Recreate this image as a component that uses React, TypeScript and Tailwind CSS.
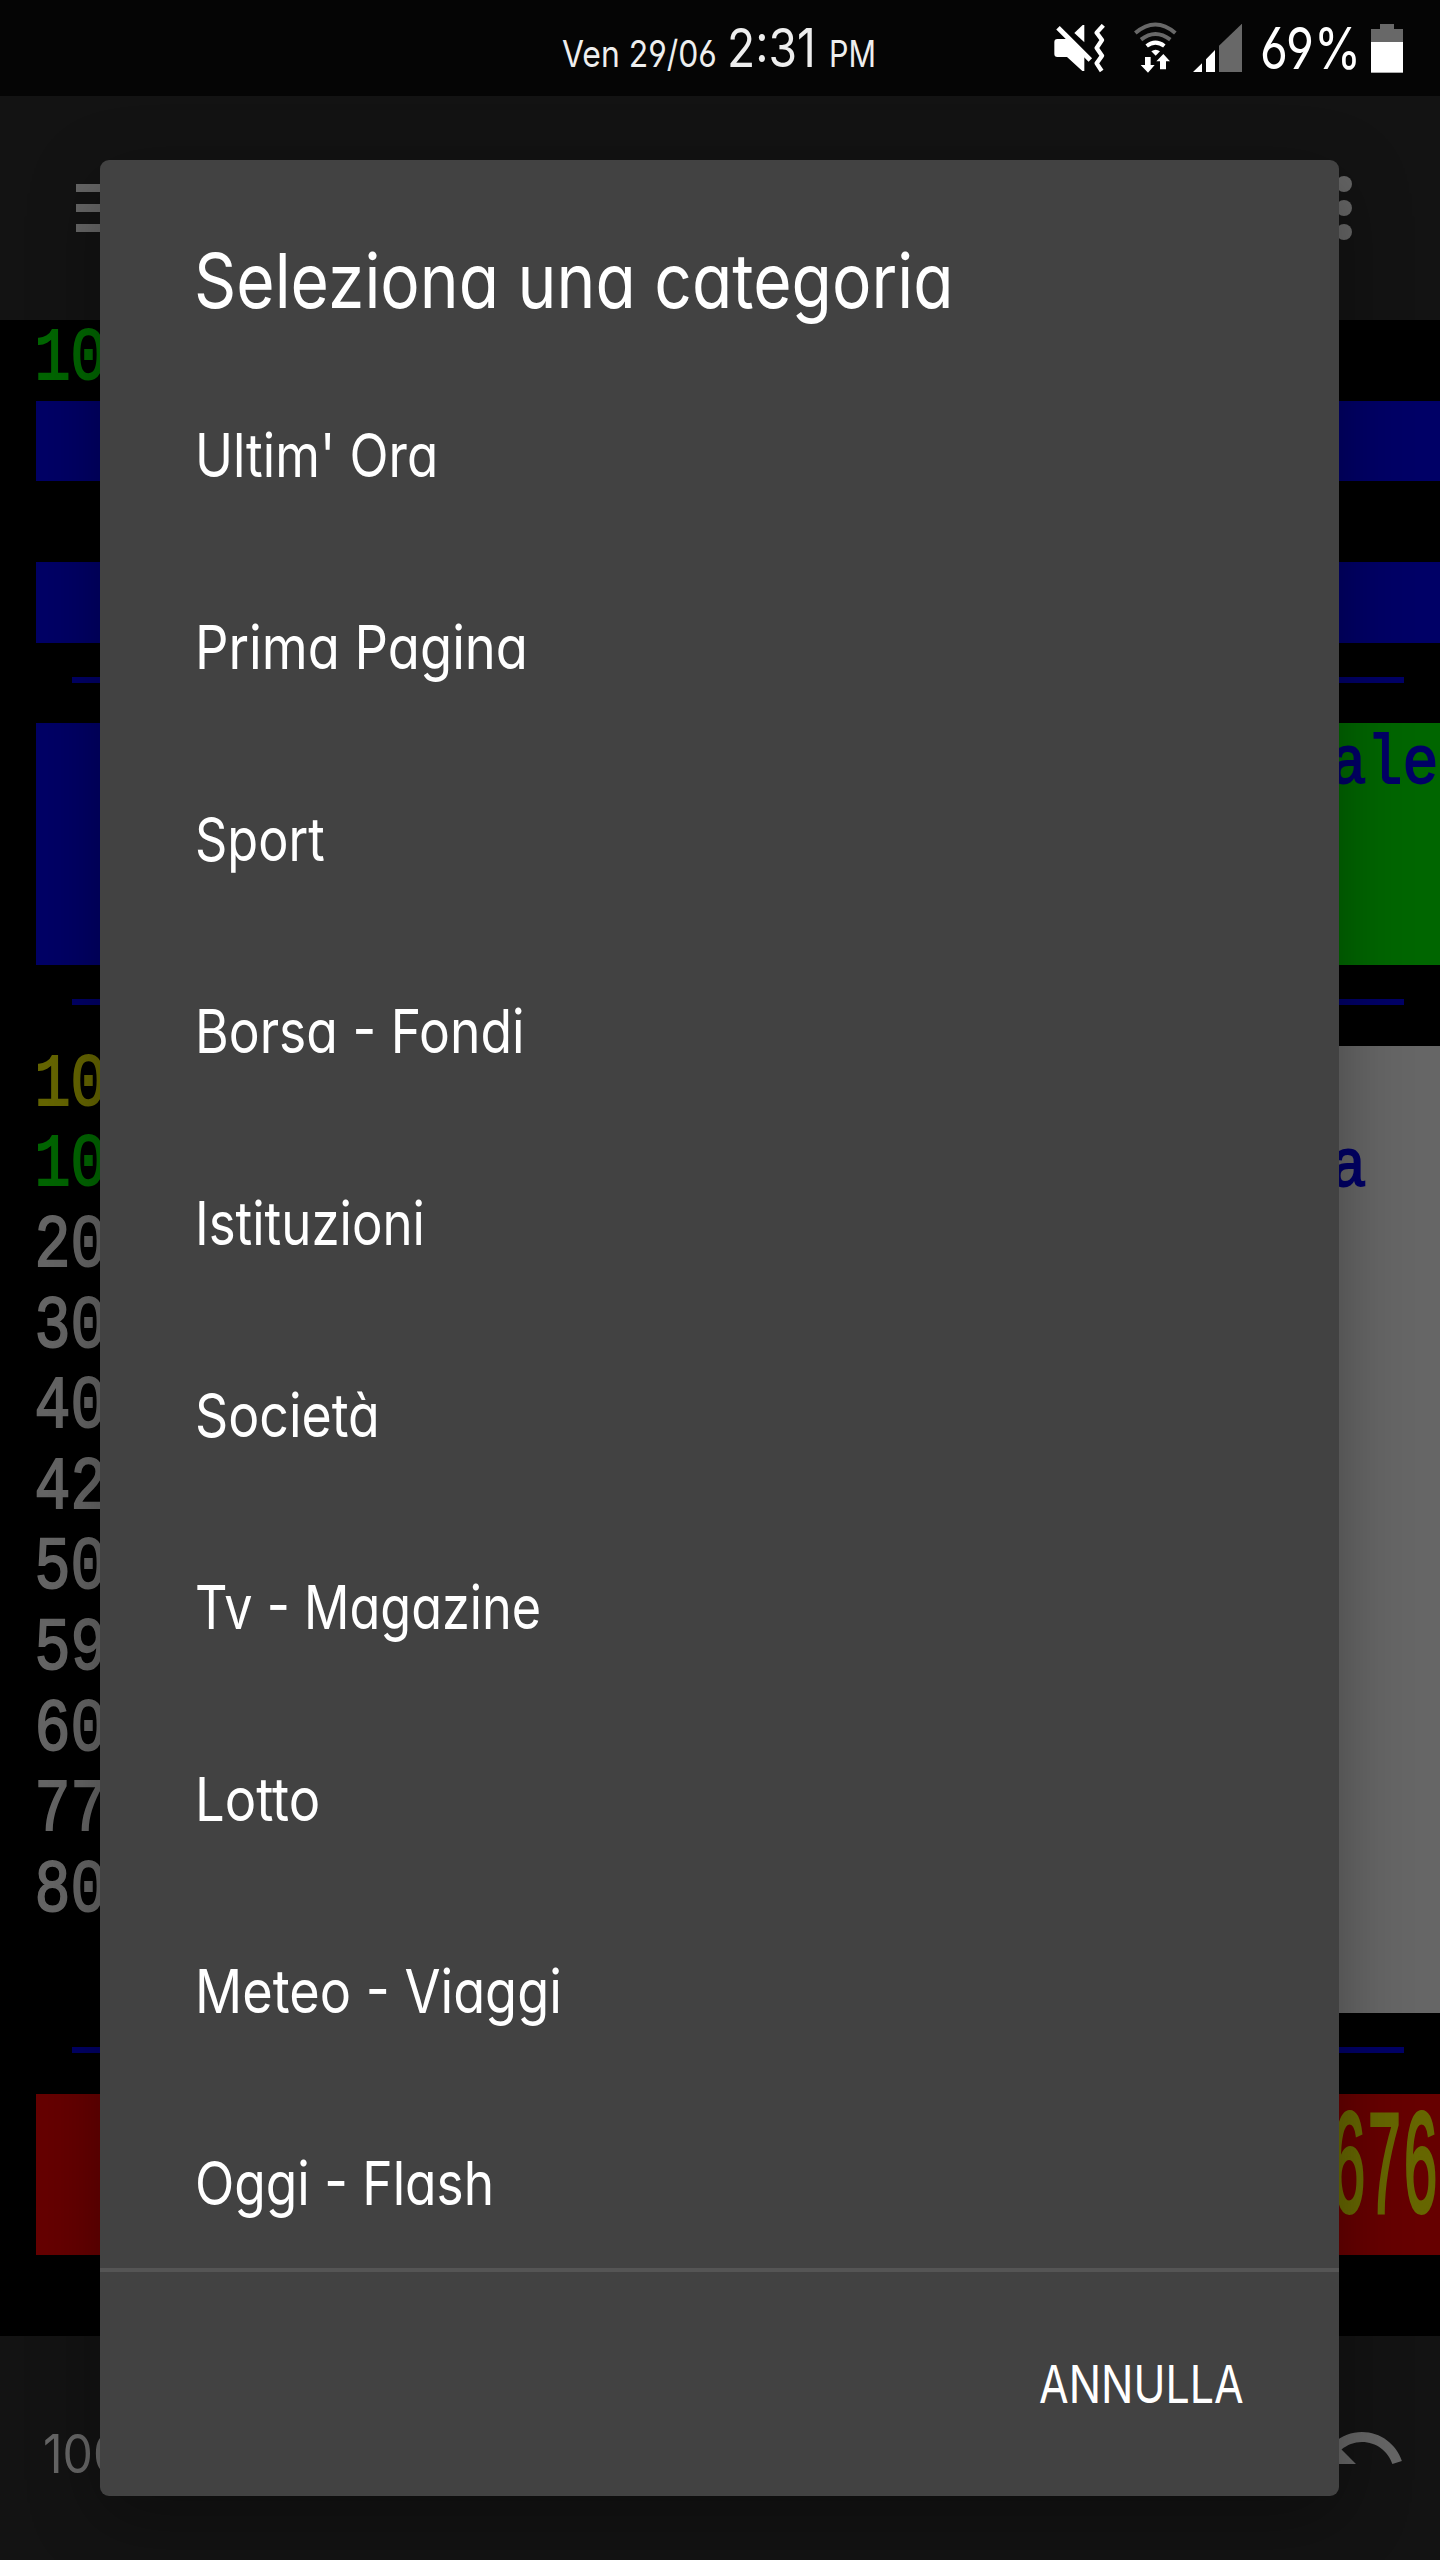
import { useLayoutEffect, useRef, useState } from "react";
import type { ReactNode } from "react";
import { clsx } from "clsx";

const categories = [
  { label: "Ultim' Ora", width: 243 },
  { label: "Prima Pagina", width: 333 },
  { label: "Sport", width: 130 },
  { label: "Borsa - Fondi", width: 330 },
  { label: "Istituzioni", width: 230 },
  { label: "Società", width: 185 },
  { label: "Tv - Magazine", width: 346 },
  { label: "Lotto", width: 125 },
  { label: "Meteo - Viaggi", width: 367 },
  { label: "Oggi - Flash", width: 299 }
];

const pageRows = [
  { text: "10", color: "text-[#006600]" },
  { fill: "bg-[#000066]" },
  {},
  { fill: "bg-[#000066]" },
  { rule: true },
  { fill: "bg-[#000066]", side: "bg-[#006600]", sideText: "ale" },
  { fill: "bg-[#000066]", side: "bg-[#006600]" },
  { fill: "bg-[#000066]", side: "bg-[#006600]" },
  { rule: true },
  { text: "10", color: "text-[#666600]", side: "bg-[#666666]" },
  { text: "10", color: "text-[#006600]", side: "bg-[#666666]", sideText: "a" },
  { text: "20", side: "bg-[#666666]" },
  { text: "30", side: "bg-[#666666]" },
  { text: "40", side: "bg-[#666666]" },
  { text: "42", side: "bg-[#666666]" },
  { text: "50", side: "bg-[#666666]" },
  { text: "59", side: "bg-[#666666]" },
  { text: "60", side: "bg-[#666666]" },
  { text: "77", side: "bg-[#666666]" },
  { text: "80", side: "bg-[#666666]" },
  { side: "bg-[#666666]" },
  { rule: true }
] as {
  text?: string;
  color?: string;
  fill?: string;
  side?: string;
  sideText?: string;
  rule?: boolean;
}[];

// Condenses a line of text horizontally to the given width
function Condensed({ width, className, children }: { width: number; className?: string; children: ReactNode }) {
  const ref = useRef<HTMLSpanElement>(null);
  const [scale, setScale] = useState(1);

  useLayoutEffect(() => {
    if (ref.current) setScale(width / ref.current.offsetWidth);
  }, [width]);

  return (
    <span className={clsx("block shrink-0", className)} style={{ width }}>
      <span
        ref={ref}
        className="inline-block origin-left whitespace-nowrap"
        style={{ transform: `scaleX(${scale})` }}
      >
        {children}
      </span>
    </span>
  );
}

function StatusBar() {
  return (
    <header className="flex h-24 shrink-0 items-start bg-[#050505] pl-[562px] text-[#eeeeee]">
      <Condensed width={155} className="text-[37px] leading-[108px]">Ven 29/06</Condensed>
      <Condensed width={89} className="ml-[10px] text-[53px] leading-[96px]">2:31</Condensed>
      <Condensed width={47} className="ml-[13px] text-[37px] leading-[108px]">PM</Condensed>

      {/* Muted + vibrate */}
      <svg className="mt-6 ml-[178px] h-[49px] w-[52px] shrink-0" viewBox="72 72 156 147" fill="#fff">
        <path d="M158 75h5v52l-30-28z" />
        <path d="M82 117h36l45 44v52h-6l-46-42H82q-9 0-9-9v-36q0-9 9-9z" />
        <path d="M84 83l97 97" stroke="#fff" strokeWidth="15" />
        <path
          d="M220 76l-20 22 16 22-16 24 16 23-16 23 15 23"
          fill="none"
          stroke="#fff"
          strokeWidth="13"
          strokeLinejoin="round"
        />
      </svg>

      {/* Wifi with traffic arrows */}
      <svg className="mt-[22px] ml-7 h-[51px] w-[43px] shrink-0" viewBox="312 66 129 153" fill="none">
        <path d="M316 99q60-51 120 0" stroke="#686868" strokeWidth="12" />
        <path d="M333 119q43-34 88 0" stroke="#686868" strokeWidth="12" />
        <path d="M350 138q26-20 53 0" stroke="#fff" strokeWidth="12" />
        <path d="M364 154q13-10 26 0l-13 13z" fill="#fff" />
        <path d="M345 171h17v24h12l-20 23-22-23h13z" fill="#fff" />
        <path d="M390 208h18v-24h12l-20-22-21 22h11z" fill="#fff" />
      </svg>

      <svg className="mt-6 ml-4 h-12 w-[49px] shrink-0" viewBox="489 72 147 144">
        <path d="M489 216l27-26v26zM528 216v-38l27-28v66z" fill="#fff" />
        <path d="M567 216v-79l69-66v145z" fill="#686868" />
      </svg>

      <Condensed width={101} className="ml-[18px] text-[58px] leading-[96px] text-white">69%</Condensed>

      <svg className="mt-6 ml-[10px] h-[49px] w-8 shrink-0" viewBox="1023 72 96 147">
        <path d="M1050 72h42v15h27v40h-96V87h27z" fill="#686868" />
        <path d="M1023 126h96v92h-96z" fill="#fff" />
      </svg>
    </header>
  );
}

function TeletextPage() {
  return (
    <main className="grid h-[2016px] shrink-0 grid-rows-[repeat(25,80.64px)] bg-black pl-9 font-['Liberation_Mono',monospace] text-[60px] leading-[80.64px] [-webkit-text-stroke:1.6px_currentColor]">
      {pageRows.map((row, index) => (
        <div key={index} className="flex justify-between">
          {row.rule ? (
            <div className="mt-[34px] mr-9 ml-9 h-[6px] flex-1 bg-[#000066]" />
          ) : (
            <>
              <div className={clsx("flex-1", row.fill)}>
                {row.text && (
                  <span
                    className={clsx(
                      "block origin-[0_56px] -translate-x-[1.5px] translate-y-[3px] scale-y-[1.24]",
                      row.color ?? "text-[#666666]"
                    )}
                  >
                    {row.text}
                  </span>
                )}
              </div>
              <div className={clsx("w-[108px]", row.side ?? row.fill)}>
                {row.sideText && (
                  <span className="block origin-[0_56px] -translate-x-[1.5px] translate-y-[4px] scale-y-[1.15] text-[#000066]">
                    {row.sideText}
                  </span>
                )}
              </div>
            </>
          )}
        </div>
      ))}
      {/* Double height footer row */}
      <div className="row-span-2 flex justify-end bg-[#660000] text-[#666600]">
        <span className="block w-[108px] origin-[0_56px] -translate-x-[1.5px] translate-y-[62px] scale-y-[2.48]">676</span>
      </div>
    </main>
  );
}

function CategoryDialog() {
  return (
    <section className="absolute top-40 left-[100px] flex h-[2336px] w-[1239px] flex-col overflow-hidden rounded-[9px] bg-[#424242] text-white">
      <h1 className="h-[199px] shrink-0 pt-[71px] pl-[94px] text-[76px] leading-[98px]">
        <Condensed width={760}>Seleziona una categoria</Condensed>
      </h1>
      <ul className="min-h-0 flex-1 overflow-hidden">
        {categories.map((category) => (
          <li key={category.label} className="flex h-48 items-center pl-[95px] text-[60.5px] leading-[193px]">
            <Condensed width={category.width}>{category.label}</Condensed>
          </li>
        ))}
      </ul>
      <footer className="flex h-[228px] shrink-0 items-center justify-end border-t-4 border-[#555555] pr-[95px] text-[52px]">
        <button type="button" className="pt-px">
          <Condensed width={205}>ANNULLA</Condensed>
        </button>
      </footer>
    </section>
  );
}

export default function App() {
  return (
    <div className="relative flex h-[2560px] w-[1440px] flex-col overflow-hidden bg-black font-['Inter',sans-serif] [font-feature-settings:'cv11','cv03','cv04']">
      <StatusBar />
      <nav className="flex h-56 shrink-0 items-start justify-between bg-[#131313] pr-[88px] pl-[76px]">
        <div className="mt-[88px] flex w-[72px] flex-col gap-3">
          <div className="h-2 bg-[#666666]" />
          <div className="h-2 bg-[#666666]" />
          <div className="h-2 bg-[#666666]" />
        </div>
        <div className="mt-20 flex flex-col gap-2">
          <div className="size-4 rounded-full bg-[#666666]" />
          <div className="size-4 rounded-full bg-[#666666]" />
          <div className="size-4 rounded-full bg-[#666666]" />
        </div>
      </nav>
      <TeletextPage />
      <div className="flex h-56 shrink-0 items-start justify-between bg-[#131313] pr-8 pl-[43px] text-[#666666]">
        <Condensed width={80} className="text-[53px] leading-[236px]">100</Condensed>
        <svg className="mt-16 size-24" viewBox="0 0 24 24" fill="currentColor">
          <path d="M12.5 8c-2.65 0-5.05.99-6.9 2.6L2 7v9h9l-3.62-3.62c1.39-1.16 3.16-1.88 5.12-1.88 3.54 0 6.55 2.31 7.6 5.5l2.37-.78C21.08 11.03 17.15 8 12.5 8z" />
        </svg>
      </div>
      {/* Dialog shadow, kept clear of the status bar */}
      <div className="absolute inset-x-0 top-24 bottom-0 overflow-hidden">
        <div className="mt-16 ml-[100px] h-[2336px] w-[1239px] rounded-[9px] shadow-[0_20px_72px_rgba(0,0,0,0.32)]" />
      </div>
      <CategoryDialog />
    </div>
  );
}
